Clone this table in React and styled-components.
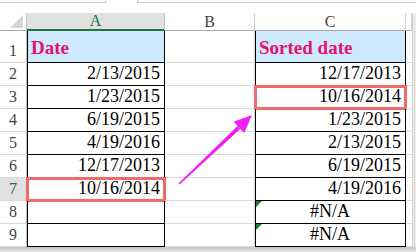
import React from 'react'
import styled, { createGlobalStyle, css } from 'styled-components'

const GlobalStyle = createGlobalStyle`
  html, body { margin: 0; padding: 0; background: #fff; }
  body { font-family: "Liberation Serif", "Times New Roman", serif; }
`

const Page = styled.div`
  position: relative;
  width: 416px;
  height: 252px;
  overflow: hidden;
  background: #fff;
`

const TopBar = styled.div`
  display: flex;
  height: 13px;
`

const NameBox = styled.div`
  width: 105px;
  height: 2px;
  border-bottom: 1px solid #c8c8c8;
  border-right: 1px solid #c8c8c8;
`

const FormulaBox = styled.div`
  flex: 1;
  height: 2px;
  margin-left: 31px;
  border-bottom: 1px solid #c8c8c8;
  border-left: 1px solid #c8c8c8;
`

const Body = styled.div`
  display: flex;
`

const Sheet = styled.div`
  display: grid;
  grid-template-columns: 27px 138px 90px 151px 6px;
  grid-template-rows: 18px 32px repeat(8, 23px);
`

const ScrollEdge = styled.div`
  width: 4px;
  background: #ececec;
  border-left: 1px solid #d0d0d0;
`

const Corner = styled.div`
  position: relative;
  box-sizing: border-box;
  border-right: 1px solid #c4c4c4;
  border-bottom: 1px solid #ababab;
  background: #fff;
  &::after {
    content: '';
    position: absolute;
    right: 3px;
    bottom: 2px;
    border-left: 13px solid transparent;
    border-bottom: 13px solid #d6d6d6;
  }
`

const ColHead = styled.div`
  box-sizing: border-box;
  display: flex;
  align-items: center;
  justify-content: center;
  font-size: 16px;
  color: #444;
  background: #fff;
  border-right: 1px solid #d4d4d4;
  border-bottom: 1px solid #ababab;
  ${p => p.$active && css`
    background: #e1e1e1;
    color: #217346;
    border-bottom: 2px solid #217346;
    border-right-color: #c4c4c4;
  `}
`

const RowHead = styled.div`
  box-sizing: border-box;
  display: flex;
  align-items: flex-end;
  justify-content: center;
  padding-bottom: 2px;
  font-size: 16px;
  line-height: 18px;
  color: #444;
  background: #fff;
  border-right: 1px solid #c4c4c4;
  border-bottom: 1px solid #d9d9d9;
  ${p => p.$active && css`
    background: #e1e1e1;
    color: #217346;
  `}
`

const Cell = styled.div`
  position: relative;
  box-sizing: border-box;
  display: flex;
  align-items: flex-end;
  justify-content: ${p => p.$align || 'flex-end'};
  padding: 0 4px 2px 4px;
  font-size: 18px;
  line-height: 20px;
  color: #000;
  white-space: nowrap;
  border-right: 1px solid #d9d9d9;
  border-bottom: 1px solid #d9d9d9;
  ${p => p.$boxed && css`
    border-right-color: #000;
    border-bottom-color: #000;
    box-shadow: inset 1px 0 0 #000;
  `}
  ${p => p.$title && css`
    background: #cde9fb;
    color: #e3126e;
    font-weight: bold;
    font-size: 19px;
    padding-bottom: 4px;
  `}
  ${p => p.$marked && css`
    &::after {
      content: '';
      position: absolute;
      inset: -1px -2px -2px -1px;
      border: 3px solid #f06a6a;
    }
  `}
  ${p => p.$error && css`
    &::before {
      content: '';
      position: absolute;
      top: 0;
      left: 1px;
      border-top: 6px solid #1e7a32;
      border-right: 6px solid transparent;
    }
  `}
`

const Shade = styled.div`
  height: 5px;
  background: linear-gradient(#c6c6c6, #e4e4e4);
`

const Arrow = styled.svg`
  position: absolute;
  left: 0;
  top: 0;
  pointer-events: none;
`

const rows = [
  { n: 1, a: 'Date', c: 'Sorted date', title: true },
  { n: 2, a: '2/13/2015', c: '12/17/2013' },
  { n: 3, a: '1/23/2015', c: '10/16/2014', markC: true },
  { n: 4, a: '6/19/2015', c: '1/23/2015' },
  { n: 5, a: '4/19/2016', c: '2/13/2015' },
  { n: 6, a: '12/17/2013', c: '6/19/2015' },
  { n: 7, a: '10/16/2014', c: '4/19/2016', markA: true },
  { n: 8, a: '', c: '#N/A', error: true },
  { n: 9, a: '', c: '#N/A', error: true },
]

export default function App() {
  return (
    <Page>
      <GlobalStyle />
      <TopBar>
        <NameBox />
        <FormulaBox />
      </TopBar>
      <Body>
        <Sheet>
          <Corner />
          <ColHead $active>A</ColHead>
          <ColHead>B</ColHead>
          <ColHead>C</ColHead>
          <ColHead />
          {rows.map(r => (
            <React.Fragment key={r.n}>
              <RowHead $active={r.markA}>{r.n}</RowHead>
              <Cell
                $boxed
                $title={r.title}
                $marked={r.markA}
                $align={r.title ? 'flex-start' : 'flex-end'}
              >
                {r.a}
              </Cell>
              <Cell />
              <Cell
                $boxed
                $title={r.title}
                $marked={r.markC}
                $error={r.error}
                $align={r.title ? 'flex-start' : r.error ? 'center' : 'flex-end'}
              >
                {r.c}
              </Cell>
              <Cell />
            </React.Fragment>
          ))}
        </Sheet>
        <ScrollEdge />
      </Body>
      <Shade />
      {/* magenta pointer from A7 over to C3 */}
      <Arrow width="416" height="252" viewBox="0 0 416 252">
        <polygon points="178.4,183.4 179.6,184.6 240.3,128.9 237.5,126" fill="#f01ff0" />
        <polygon points="252,115 244.2,133 233.6,121.8" fill="#f01ff0" />
      </Arrow>
    </Page>
  )
}
